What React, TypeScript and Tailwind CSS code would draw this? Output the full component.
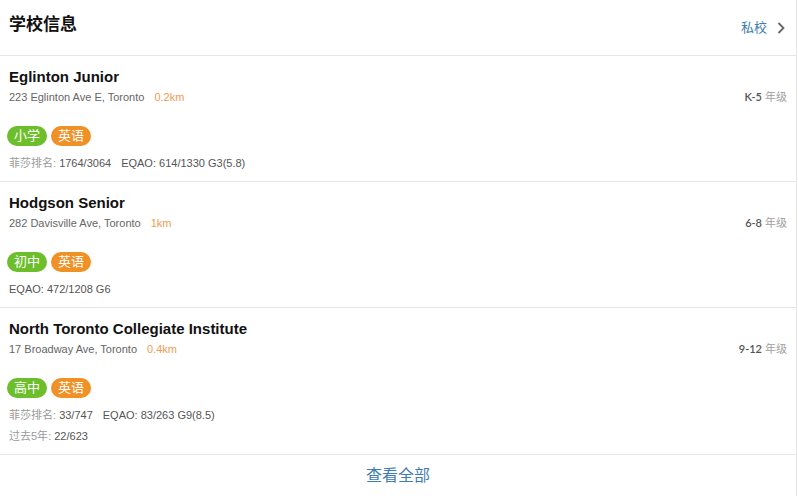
import React from "react";

type School = {
  name: string;
  addr: string;
  dist: string;
  grade: string;
  tags: [string, string];
  lines: { label?: string; value: string }[][];
};

const schools: School[] = [
  {
    name: "Eglinton Junior",
    addr: "223 Eglinton Ave E, Toronto",
    dist: "0.2km",
    grade: "K-5",
    tags: ["小学", "英语"],
    lines: [[{ label: "菲莎排名", value: "1764/3064" }, { value: "EQAO: 614/1330 G3(5.8)" }]],
  },
  {
    name: "Hodgson Senior",
    addr: "282 Davisville Ave, Toronto",
    dist: "1km",
    grade: "6-8",
    tags: ["初中", "英语"],
    lines: [[{ value: "EQAO: 472/1208 G6" }]],
  },
  {
    name: "North Toronto Collegiate Institute",
    addr: "17 Broadway Ave, Toronto",
    dist: "0.4km",
    grade: "9-12",
    tags: ["高中", "英语"],
    lines: [
      [{ label: "菲莎排名", value: "33/747" }, { value: "EQAO: 83/263 G9(8.5)" }],
      [{ label: "过去5年", value: "22/623" }],
    ],
  },
];

const sans = "font-['Liberation_Sans','Noto_Sans_CJK_SC',sans-serif]";

function Card({ s }: { s: School }) {
  return (
    <div className="border-b border-[#e6e6e6] px-[9px] pt-[11px] pb-[7px]">
      <div className="text-[15px] leading-[20px] font-bold text-[#111]">{s.name}</div>
      <div className="mt-[2px] flex justify-between text-[11px] leading-[16px]">
        <div className="text-[#666]">
          {s.addr}
          <span className="ml-[10px] text-[#f39a51]">{s.dist}</span>
        </div>
        <div>
          <span className="text-[#555] font-['Lato','Liberation_Sans',sans-serif] font-semibold">{s.grade}</span>
          <span className="ml-[3px] text-[#a0a0a0]">年级</span>
        </div>
      </div>
      <div className="mt-[21px] -ml-[2px] flex gap-[4px]">
        <span className="h-[20px] w-[40px] rounded-full bg-[#6cbf2b] text-white text-[13px] leading-[20px] text-center">
          {s.tags[0]}
        </span>
        <span className="h-[20px] w-[40px] rounded-full bg-[#ef9124] text-white text-[13px] leading-[20px] text-center">
          {s.tags[1]}
        </span>
      </div>
      <div className="mt-[7px]">
        {s.lines.map((ln, i) => (
          <div key={i} className="text-[11px] leading-[21px] text-[#555] flex gap-[10px]">
            {ln.map((p, j) => (
              <span key={j}>
                {p.label && <span className="text-[#9a9a9a]">{p.label}: </span>}
                {p.value}
              </span>
            ))}
          </div>
        ))}
      </div>
    </div>
  );
}

export default function App() {
  return (
    <div className={`${sans} w-[797px] h-[496px] bg-white border-r border-[#e6e6e6]`}>
      <div className="h-[56px] border-b border-[#e6e6e6] flex items-center justify-between pl-[9px] pr-[10px]">
        <div className="text-[17px] leading-[24px] font-bold text-[#111] mb-[5px]">学校信息</div>
        <div className="flex items-center">
          <span className="text-[13px] text-[#3f80ad]">私校</span>
          <svg width="8" height="12" viewBox="0 0 8 12" className="ml-[10px] mr-[1px]">
            <polyline points="1.5,1 6.5,6 1.5,11" fill="none" stroke="#666" strokeWidth="1.8" />
          </svg>
        </div>
      </div>
      {schools.map((s) => (
        <Card key={s.name} s={s} />
      ))}
      <div className="h-[41px] flex items-center justify-center text-[16px] text-[#3f7cb3]">查看全部</div>
    </div>
  );
}
